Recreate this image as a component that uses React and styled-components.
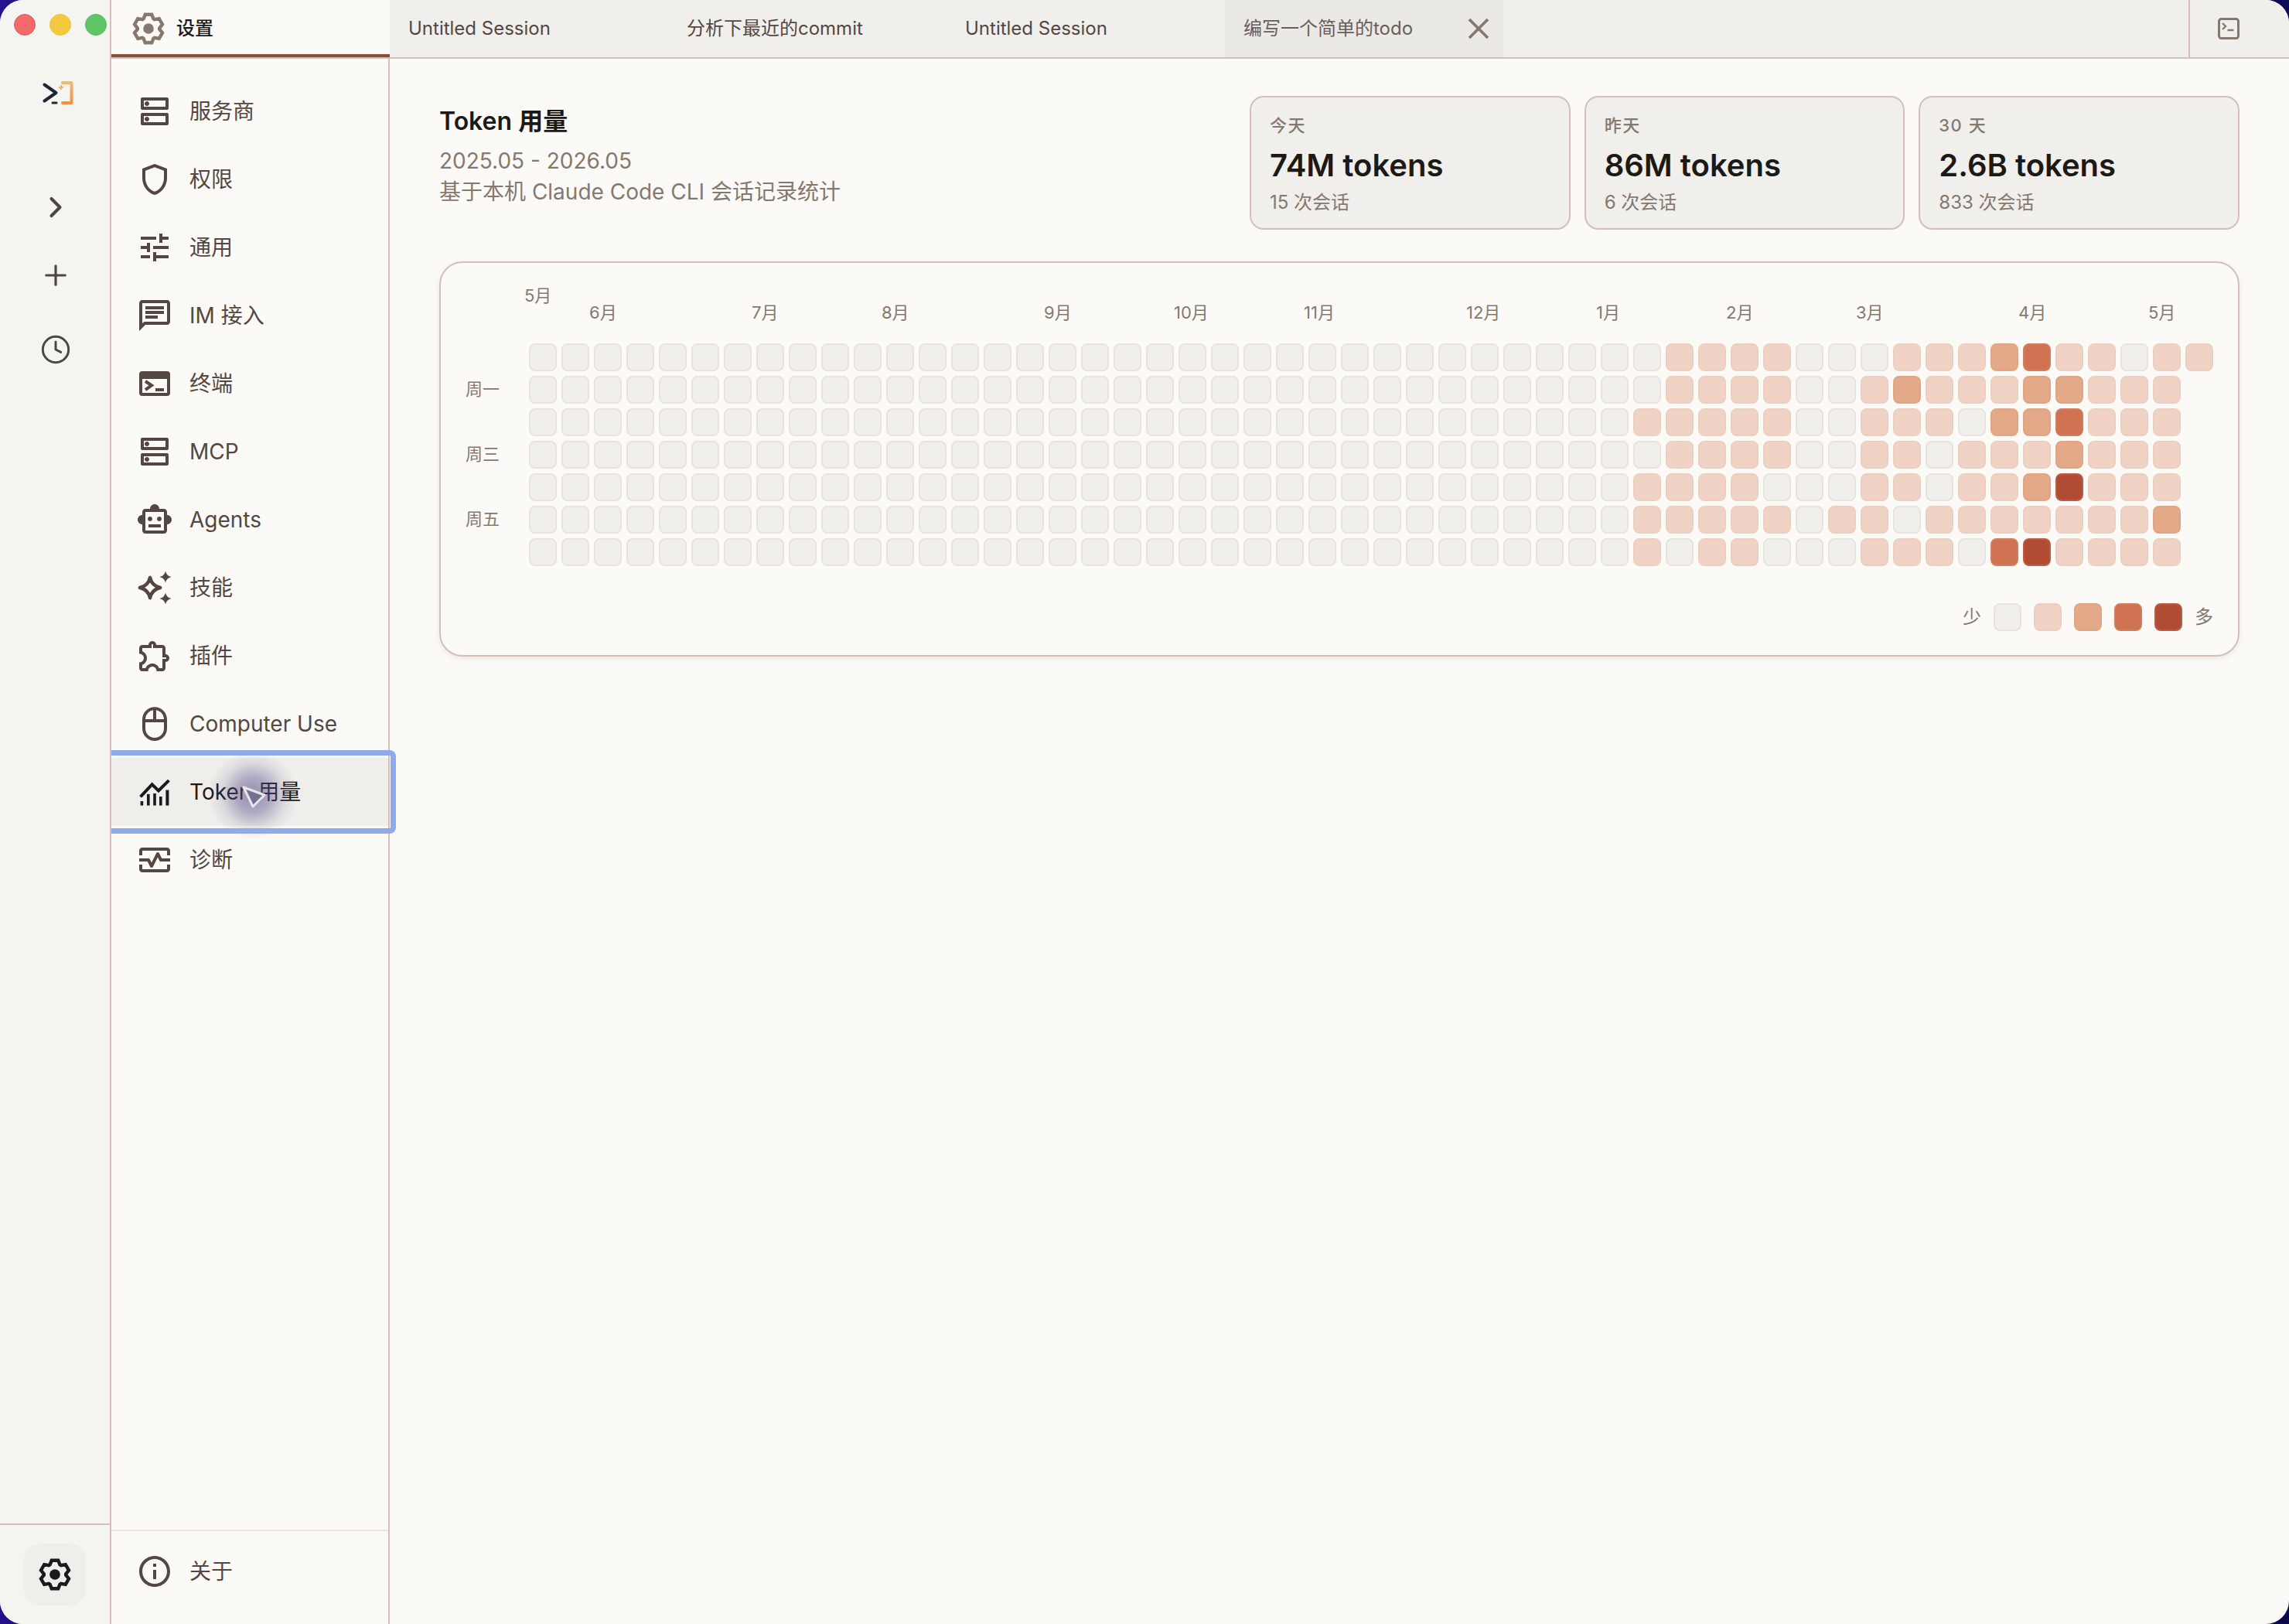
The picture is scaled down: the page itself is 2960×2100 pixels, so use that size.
import React from 'react';
import styled, { createGlobalStyle } from 'styled-components';
import { ChevronRight, Plus, Clock } from 'lucide-react';
import {
  MdOutlineDns,
  MdOutlineShield,
  MdOutlineTune,
  MdOutlineChat,
  MdOutlineSmartToy,
  MdOutlineExtension,
  MdOutlineMouse,
  MdOutlineMonitorHeart,
  MdOutlineInfo,
} from 'react-icons/md';

const FONT = 'Inter, "Noto Sans CJK SC", sans-serif';
const LINE = '#d6bfb8';
const MUTED = '#85786f';
const BODY = '#544742';
const INK = '#1b1a18';
const PAPER = '#fbfaf6';

const Global = createGlobalStyle`
  html, body {
    margin: 0;
    padding: 0;
    background: linear-gradient(100deg, #25128f 0%, #1b0f78 50%, #0c0a4c 100%);
  }
  * {
    box-sizing: border-box;
  }
`;

const Window = styled.div`
  display: flex;
  width: 2960px;
  height: 2100px;
  border-radius: 30px;
  overflow: hidden;
  background: ${PAPER};
  font-family: ${FONT};
  color: ${BODY};
`;

const Rail = styled.aside`
  display: flex;
  flex-direction: column;
  flex: 0 0 144px;
  border-right: 2px solid ${LINE};
  background: #f4f4f0;
`;

const Lights = styled.div`
  display: flex;
  gap: 18px;
  padding: 18px 0 0 18px;
`;

const Light = styled.span`
  width: 28px;
  height: 28px;
  border-radius: 50%;
  background: ${props => props.$color};
  border: 1px solid ${props => props.$edge};
`;

const LogoWrap = styled.div`
  height: 32px;
  margin: 58px 0 88px 54px;
`;

const RailButton = styled.div`
  display: flex;
  align-items: center;
  justify-content: center;
  height: ${props => props.$h || 88}px;
  padding-left: 2px;
  color: #4c4642;
`;

const RailFoot = styled.div`
  margin-top: auto;
  height: 130px;
  padding: 24px 0 0 31px;
  border-top: 2px solid ${LINE};
`;

const GearButton = styled.div`
  display: flex;
  align-items: center;
  justify-content: center;
  width: 80px;
  height: 80px;
  border-radius: 20px;
  background: #efeeea;
  color: ${INK};
`;

const Main = styled.div`
  display: flex;
  flex-direction: column;
  flex: 1;
  min-width: 0;
`;

const TabBar = styled.div`
  display: flex;
  flex: 0 0 76px;
  border-bottom: 2px solid ${LINE};
  background: #f0efeb;
`;

const SettingsTab = styled.div`
  display: flex;
  align-items: center;
  gap: 12px;
  width: 360px;
  height: 74px;
  padding: 4px 24px 0;
  border-bottom: 4px solid #884f36;
  background: ${PAPER};
  font-size: 24px;
  line-height: 30px;
  font-weight: 500;
  color: ${INK};
`;

const TabGear = styled.span`
  display: flex;
  color: ${MUTED};
`;

const Tab = styled.div`
  display: flex;
  align-items: center;
  justify-content: space-between;
  width: 360px;
  height: 74px;
  padding: 0 18px 0 24px;
  background: ${props => (props.$active ? '#eae9e5' : 'transparent')};
  font-size: 24px;
  line-height: 32px;
  color: ${props => (props.$active ? '#6b5e58' : BODY)};
`;

const TermButton = styled.div`
  display: flex;
  align-items: center;
  justify-content: center;
  width: 130px;
  margin-left: auto;
  padding-right: 28px;
  border-left: 2px solid ${LINE};
`;

const Body = styled.div`
  display: flex;
  flex: 1;
  min-height: 0;
`;

const Nav = styled.nav`
  display: flex;
  flex-direction: column;
  flex: 0 0 360px;
  padding-top: 24px;
  border-right: 2px solid ${LINE};
`;

const NavRow = styled.div`
  position: relative;
  display: flex;
  align-items: center;
  gap: 21px;
  height: 88px;
  padding-left: 32px;
  font-size: 28px;
  line-height: 34px;
  color: ${props => (props.$active ? INK : BODY)};
  background: ${props => (props.$active ? '#efeeea' : 'transparent')};

  ${props =>
    props.$active &&
    `
    &::after {
      content: '';
      position: absolute;
      left: 0;
      top: -10px;
      right: -10px;
      bottom: -10px;
      border: 7px solid #8fabed;
      border-left: 0;
      border-radius: 0 8px 8px 0;
    }
  `}
`;

const NavIcon = styled.span`
  display: flex;
  flex: 0 0 48px;
  height: 48px;
  align-items: center;
  justify-content: center;
`;

const CursorGlow = styled.span`
  position: absolute;
  left: 126px;
  top: -9px;
  width: 114px;
  height: 114px;
  border-radius: 50%;
  background: radial-gradient(
    circle,
    rgba(88, 76, 140, 0.6) 0%,
    rgba(88, 76, 140, 0.42) 28%,
    rgba(88, 76, 140, 0.12) 52%,
    rgba(88, 76, 140, 0) 72%
  );
`;

const CursorMark = styled.svg`
  position: absolute;
  left: 166px;
  top: 33px;
`;

const NavFoot = styled.div`
  margin-top: auto;
  padding: 8px 0 24px;
  border-top: 2px solid #ece4df;
`;

const Content = styled.main`
  flex: 1;
  min-width: 0;
  padding: 48px 64px 0;
`;

const Header = styled.header`
  display: flex;
  justify-content: space-between;
  margin-bottom: 41px;
`;

const Title = styled.h1`
  margin: 13px 0 11px;
  font-size: 32px;
  line-height: 40px;
  font-weight: 600;
  color: ${INK};
`;

const Sub = styled.div`
  font-size: 28px;
  line-height: 40px;
  color: ${MUTED};
`;

const Stats = styled.div`
  display: grid;
  grid-template-columns: repeat(3, 1fr);
  gap: 18px;
  width: 1280px;
`;

const Stat = styled.div`
  padding: 24px 24px 18px;
  border: 2px solid ${LINE};
  border-radius: 18px;
  background: #f0efeb;
`;

const StatLabel = styled.div`
  font-size: 22px;
  line-height: 24px;
  letter-spacing: 1.5px;
  font-weight: 500;
  color: ${MUTED};
`;

const StatValue = styled.div`
  margin-top: 16px;
  font-size: 40px;
  line-height: 48px;
  font-weight: 600;
  color: ${INK};
`;

const StatSub = styled.div`
  margin-top: 9px;
  font-size: 24px;
  line-height: 30px;
  color: ${MUTED};
`;

const HeatCard = styled.section`
  padding: 31px 32px 31px;
  border: 2px solid ${LINE};
  border-radius: 30px;
  background: ${PAPER};
  box-shadow: 0 3px 6px rgba(120, 90, 80, 0.1);
`;

const Months = styled.div`
  display: grid;
  grid-template-columns: repeat(52, 42px);
  grid-template-rows: 22px 22px;
  margin: 0 0 29px 76px;
`;

const Month = styled.span`
  grid-row: ${props => props.$row};
  grid-column: ${props => props.$col} / span 3;
  font-size: 22px;
  line-height: 22px;
  color: ${MUTED};
`;

const HeatBody = styled.div`
  display: flex;
`;

const Days = styled.div`
  display: grid;
  grid-template-rows: repeat(7, 36px);
  row-gap: 6px;
  flex: 0 0 82px;
`;

const Day = styled.span`
  grid-row: ${props => props.$row};
  align-self: start;
  font-size: 22px;
  line-height: 34px;
  color: ${MUTED};
`;

const Grid = styled.div`
  display: grid;
  grid-auto-flow: column;
  grid-template-rows: repeat(7, 36px);
  grid-auto-columns: 36px;
  gap: 6px;
`;

const LEVELS = [
  { bg: '#f0efeb', edge: '#e7e3df' },
  { bg: '#f0d3c5', edge: '#ebcfc1' },
  { bg: '#e4a988', edge: '#e2a583' },
  { bg: '#d07352', edge: '#d17c5d' },
  { bg: '#b04c33', edge: '#bb5c44' },
];

const Cell = styled.span`
  width: 36px;
  height: 36px;
  border-radius: 8px;
  border: 2px solid ${props => LEVELS[props.$level].edge};
  background: ${props => LEVELS[props.$level].bg};
`;

const Legend = styled.div`
  display: flex;
  align-items: center;
  justify-content: flex-end;
  gap: 16px;
  margin-top: 48px;
  font-size: 24px;
  line-height: 36px;
  color: ${MUTED};
`;

const MONTHS = [
  ['5月', 1, 1],
  ['6月', 3, 2],
  ['7月', 8, 2],
  ['8月', 12, 2],
  ['9月', 17, 2],
  ['10月', 21, 2],
  ['11月', 25, 2],
  ['12月', 30, 2],
  ['1月', 34, 2],
  ['2月', 38, 2],
  ['3月', 42, 2],
  ['4月', 47, 2],
  ['5月', 51, 2],
];

// rows of the last weeks, starting at column 33; everything before is empty
const HEAT = [
  '0011110001112311011',
  '001111001211122111',
  '011111001110223111',
  '001111001101112111',
  '011110001101124111',
  '011111011011111112',
  '010110001110341111',
];

const cells = [];
for (let col = 0; col < 52; col++) {
  for (let row = 0; row < 7; row++) {
    const ch = col >= 33 ? HEAT[row][col - 33] : '0';
    if (ch !== undefined) cells.push({ key: `${col}-${row}`, level: Number(ch) });
  }
}

const gearPoints = (() => {
  const pts = [];
  for (let i = 0; i < 6; i++) {
    const a = i * 60 - 90;
    [[-27, 7.1], [-13, 9.4], [13, 9.4], [27, 7.1]].forEach(([d, r]) => {
      const t = ((a + d) * Math.PI) / 180;
      pts.push(`${(12 + r * Math.cos(t)).toFixed(2)},${(12 + r * Math.sin(t)).toFixed(2)}`);
    });
  }
  return pts.join(' ');
})();

const Gear = ({ size = 48 }) => (
  <svg width={size} height={size} viewBox="0 0 24 24" fill="none">
    <polygon points={gearPoints} stroke="currentColor" strokeWidth="2.2" strokeLinejoin="miter" />
    <circle cx="12" cy="12" r="3.4" fill="currentColor" />
  </svg>
);

const Logo = () => (
  <svg width="42" height="32" viewBox="0 0 42 32" fill="none">
    <defs>
      <linearGradient id="logoGrad" x1="0" y1="0" x2="0" y2="1">
        <stop offset="0" stopColor="#f3b873" />
        <stop offset="1" stopColor="#f78f3e" />
      </linearGradient>
    </defs>
    <path d="M3.5 5.5 18.5 16 3.5 26.5" stroke="#1f2533" strokeWidth="4" strokeLinecap="round" strokeLinejoin="round" />
    <path d="M14 29h5" stroke="#1f2533" strokeWidth="3" strokeLinecap="round" />
    <path d="M22 9h6M25 6v6" stroke="#f5b15f" strokeWidth="1.8" />
    <path d="M27 3h11.5v26H27" stroke="url(#logoGrad)" strokeWidth="4" strokeLinejoin="round" strokeLinecap="round" />
  </svg>
);

const TermWindow = () => (
  <svg width="48" height="48" viewBox="0 0 24 24">
    <path
      fillRule="evenodd"
      fill={BODY}
      d="M4 4h16a2 2 0 0 1 2 2v12a2 2 0 0 1-2 2H4a2 2 0 0 1-2-2V6a2 2 0 0 1 2-2zM4 9v9h16V9z"
    />
    <path d="M6 10.5 10 13.2 6 16" fill="none" stroke={BODY} strokeWidth="2" />
    <path d="M12.5 16H18" stroke={BODY} strokeWidth="2" />
  </svg>
);

const star = (cx, cy, r) => {
  const k = r * 0.18;
  return `M${cx} ${cy - r}Q${cx + k} ${cy - k} ${cx + r} ${cy}Q${cx + k} ${cy + k} ${cx} ${cy + r}Q${cx - k} ${cy + k} ${cx - r} ${cy}Q${cx - k} ${cy - k} ${cx} ${cy - r}Z`;
};

const Sparks = () => (
  <svg width="48" height="48" viewBox="0 0 24 24">
    <path d={star(9, 12, 6.6)} fill="none" stroke={BODY} strokeWidth="2.2" strokeLinejoin="round" />
    <path d={star(19, 5, 3.8)} fill={BODY} />
    <path d={star(19, 19, 3.8)} fill={BODY} />
  </svg>
);

const ChartIcon = () => (
  <svg width="48" height="48" viewBox="0 0 24 24" fill={INK}>
    <path d="M2.8 15.2 10.3 7.2l4.2 4 6.7-6.6" fill="none" stroke={INK} strokeWidth="2" />
    <rect x="2.8" y="18" width="1.8" height="2.8" />
    <rect x="7" y="13.4" width="1.8" height="7.4" />
    <rect x="11.1" y="13" width="1.8" height="7.8" />
    <rect x="15" y="15" width="1.8" height="5.8" />
    <rect x="19.2" y="10.8" width="2" height="10" />
  </svg>
);

const NAV = [
  { label: '服务商', icon: <MdOutlineDns size={48} /> },
  { label: '权限', icon: <MdOutlineShield size={48} /> },
  { label: '通用', icon: <MdOutlineTune size={48} /> },
  { label: 'IM 接入', icon: <MdOutlineChat size={48} /> },
  { label: '终端', icon: <TermWindow /> },
  { label: 'MCP', icon: <MdOutlineDns size={48} /> },
  { label: 'Agents', icon: <MdOutlineSmartToy size={48} /> },
  { label: '技能', icon: <Sparks /> },
  { label: '插件', icon: <MdOutlineExtension size={48} /> },
  { label: 'Computer Use', icon: <MdOutlineMouse size={48} /> },
  { label: 'Token 用量', icon: <ChartIcon />, active: true },
  { label: '诊断', icon: <MdOutlineMonitorHeart size={48} /> },
];

const STATS = [
  { label: '今天', value: '74M tokens', sub: '15 次会话' },
  { label: '昨天', value: '86M tokens', sub: '6 次会话' },
  { label: '30 天', value: '2.6B tokens', sub: '833 次会话' },
];

const App = () => (
  <Window>
    <Global />
    <Rail>
      <Lights>
        <Light $color="#f26b6c" $edge="#e65355" />
        <Light $color="#f5c93f" $edge="#edc02f" />
        <Light $color="#60c566" $edge="#55b85a" />
      </Lights>
      <LogoWrap>
        <Logo />
      </LogoWrap>
      <RailButton>
        <ChevronRight size={44} strokeWidth={2.2} />
      </RailButton>
      <RailButton>
        <Plus size={42} strokeWidth={1.8} />
      </RailButton>
      <RailButton $h={104}>
        <Clock size={40} strokeWidth={1.8} />
      </RailButton>
      <RailFoot>
        <GearButton>
          <Gear />
        </GearButton>
      </RailFoot>
    </Rail>
    <Main>
      <TabBar>
        <SettingsTab>
          <TabGear>
            <Gear />
          </TabGear>
          设置
        </SettingsTab>
        <Tab>Untitled Session</Tab>
        <Tab>分析下最近的commit</Tab>
        <Tab>Untitled Session</Tab>
        <Tab $active>
          编写一个简单的todo
          <svg width="28" height="28" viewBox="0 0 28 28">
            <path d="M2 2 26 26M26 2 2 26" stroke={MUTED} strokeWidth="3.8" />
          </svg>
        </Tab>
        <TermButton>
          <svg width="28" height="28" viewBox="0 0 28 28" fill="none" stroke={MUTED}>
            <rect x="1.5" y="1.5" width="25" height="25" rx="3" strokeWidth="3" />
            <path d="M6 7l4 4-4 4" strokeWidth="2.4" />
            <path d="M12.5 16h8" strokeWidth="2.4" />
          </svg>
        </TermButton>
      </TabBar>
      <Body>
        <Nav>
          {NAV.map(item => (
            <NavRow key={item.label} $active={item.active}>
              <NavIcon>{item.icon}</NavIcon>
              {item.label}
              {item.active && (
                <>
                  <CursorGlow />
                  <CursorMark width="36" height="34" viewBox="0 0 36 34">
                    <path
                      d="M5 5 32 15 17 30Z"
                      fill="#77708f"
                      stroke="#e8e6ea"
                      strokeWidth="3"
                      strokeLinejoin="round"
                    />
                  </CursorMark>
                </>
              )}
            </NavRow>
          ))}
          <NavFoot>
            <NavRow>
              <NavIcon>
                <MdOutlineInfo size={48} />
              </NavIcon>
              关于
            </NavRow>
          </NavFoot>
        </Nav>
        <Content>
          <Header>
            <div>
              <Title>Token 用量</Title>
              <Sub>2025.05 - 2026.05</Sub>
              <Sub>基于本机 Claude Code CLI 会话记录统计</Sub>
            </div>
            <Stats>
              {STATS.map(stat => (
                <Stat key={stat.label}>
                  <StatLabel>{stat.label}</StatLabel>
                  <StatValue>{stat.value}</StatValue>
                  <StatSub>{stat.sub}</StatSub>
                </Stat>
              ))}
            </Stats>
          </Header>
          <HeatCard>
            <Months>
              {MONTHS.map(([label, col, row]) => (
                <Month key={`${label}-${col}`} $col={col} $row={row}>
                  {label}
                </Month>
              ))}
            </Months>
            <HeatBody>
              <Days>
                <Day $row={2}>周一</Day>
                <Day $row={4}>周三</Day>
                <Day $row={6}>周五</Day>
              </Days>
              <Grid>
                {cells.map(cell => (
                  <Cell key={cell.key} $level={cell.level} />
                ))}
              </Grid>
            </HeatBody>
            <Legend>
              少
              {LEVELS.map((_, level) => (
                <Cell key={level} $level={level} />
              ))}
              多
            </Legend>
          </HeatCard>
        </Content>
      </Body>
    </Main>
  </Window>
);

export default App;
